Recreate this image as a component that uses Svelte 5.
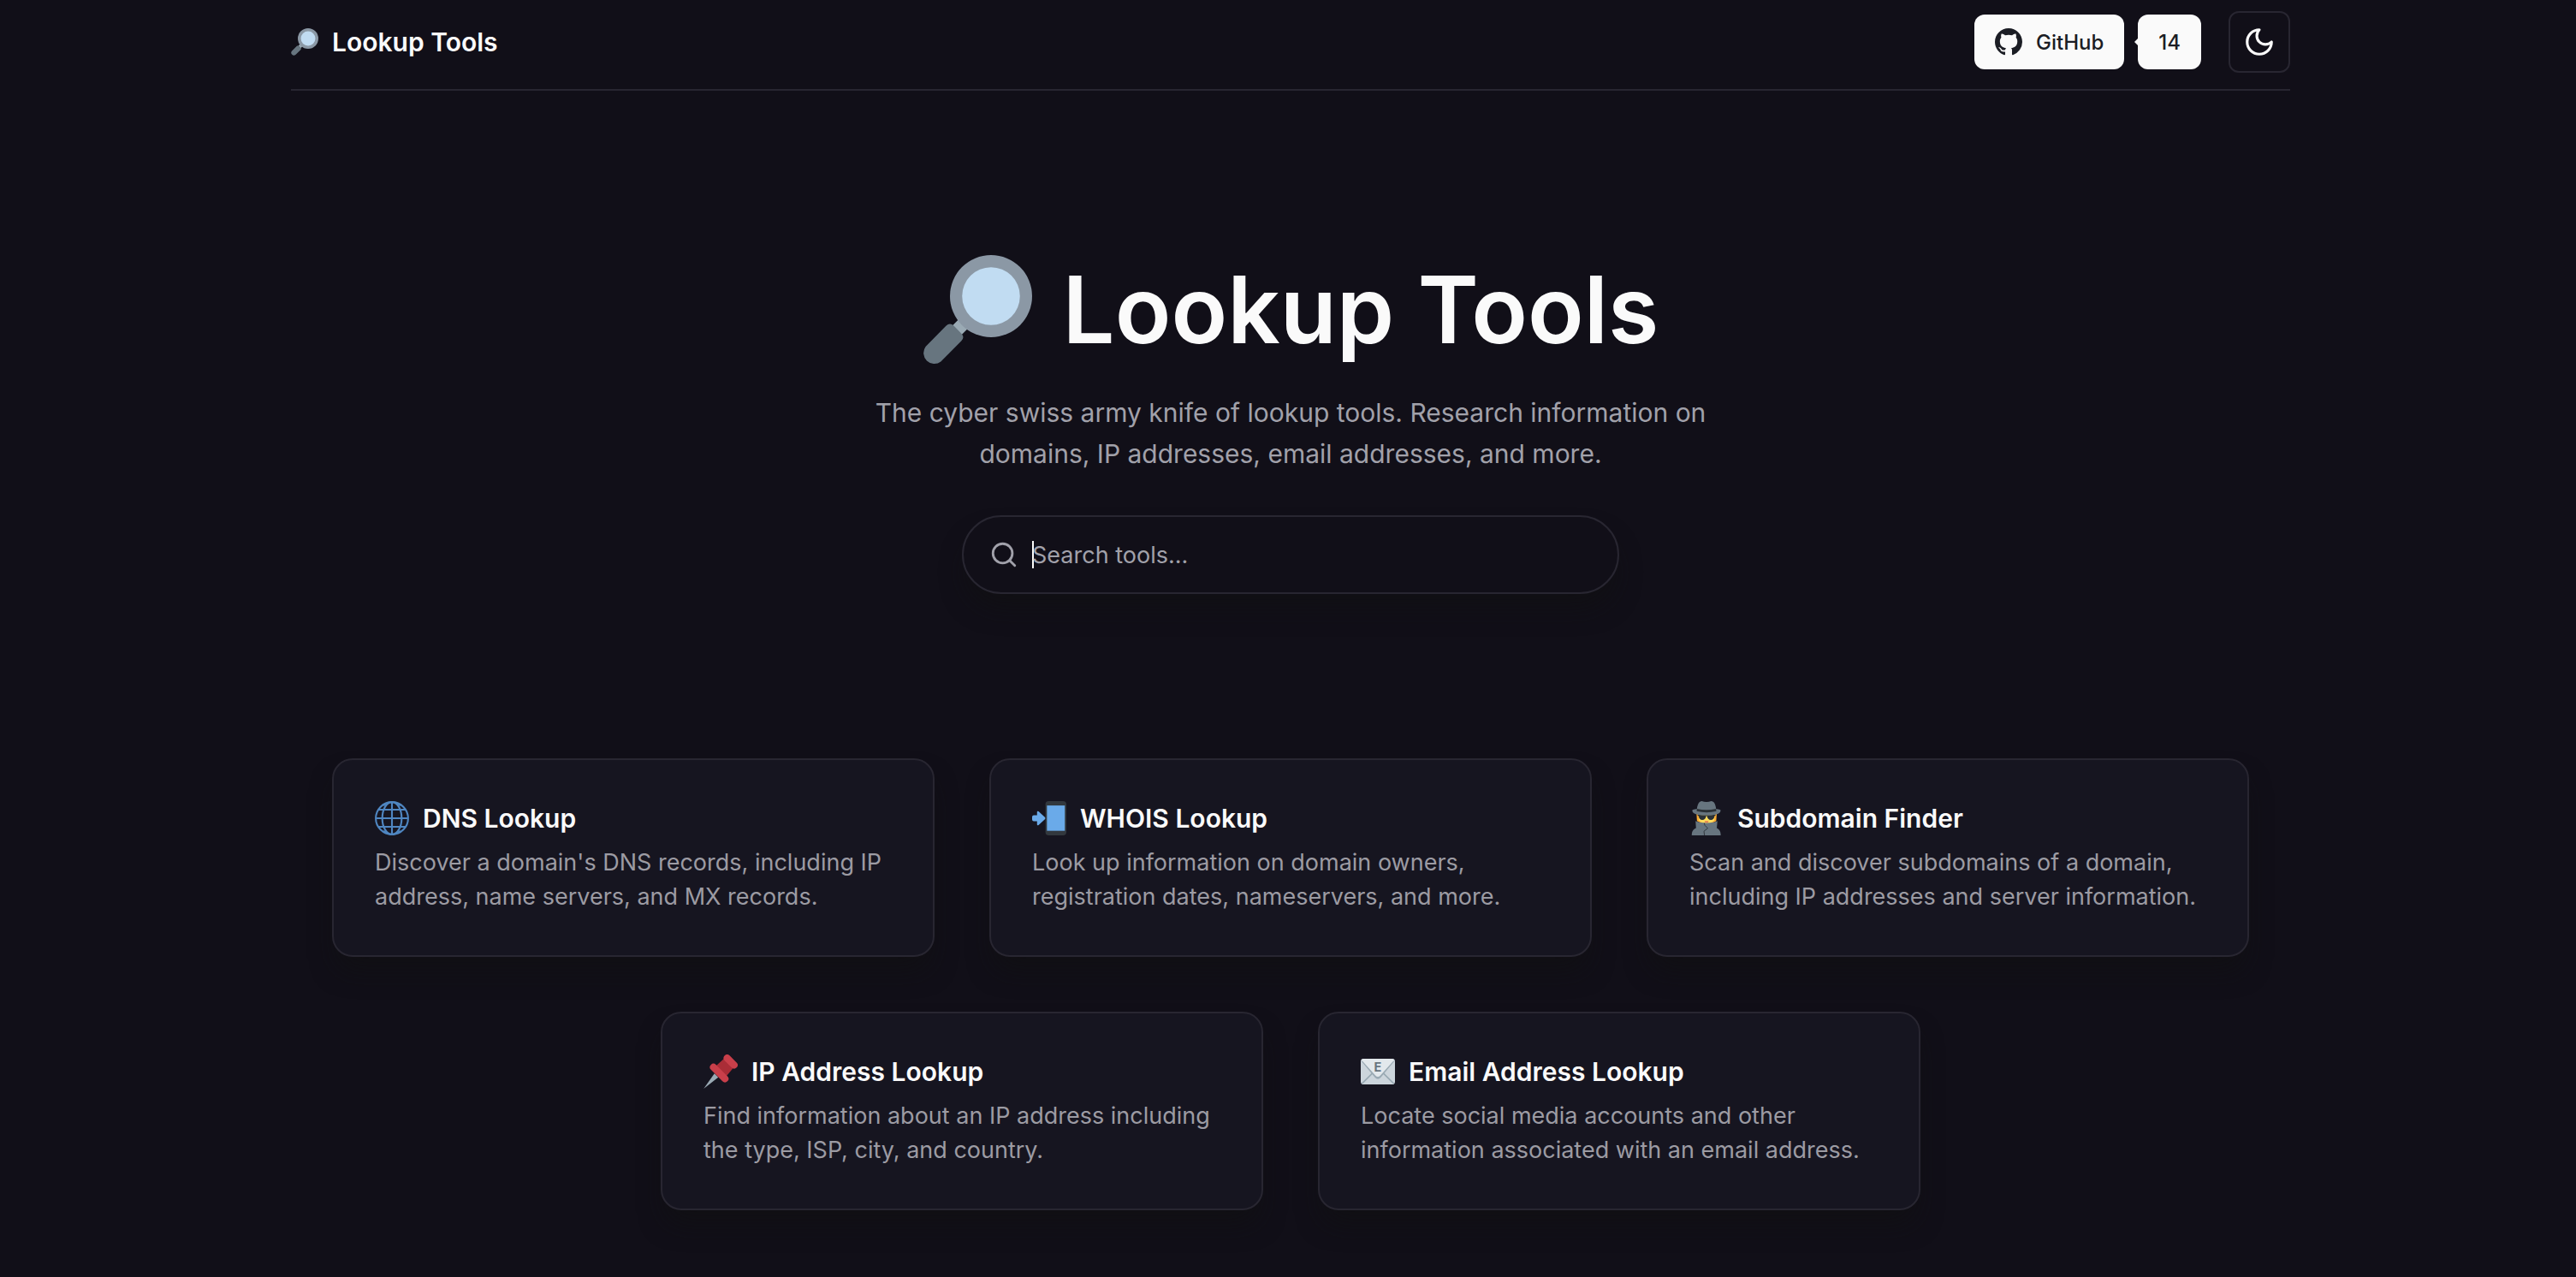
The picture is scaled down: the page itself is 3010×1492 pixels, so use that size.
<script>
  const tools = [
    { icon: 'globe', title: 'DNS Lookup', text: "Discover a domain's DNS records, including IP address, name servers, and MX records." },
    { icon: 'phone', title: 'WHOIS Lookup', text: 'Look up information on domain owners, registration dates, nameservers, and more.' },
    { icon: 'detective', title: 'Subdomain Finder', text: 'Scan and discover subdomains of a domain, including IP addresses and server information.' },
    { icon: 'pin', title: 'IP Address Lookup', text: 'Find information about an IP address including the type, ISP, city, and country.' },
    { icon: 'email', title: 'Email Address Lookup', text: 'Locate social media accounts and other information associated with an email address.' }
  ];
  let query = $state('');
</script>

{#snippet magnifier()}
  <svg viewBox="0 0 36 36" aria-hidden="true">
    <path fill="#9aaab4" d="M9.8 23.2l4-4 3 3-4 4z" />
    <path fill="#67757f" d="M1 30.1l6.7-6.8q1.3-1.3 2.6 0l2.4 2.4q1.3 1.3 0 2.6L6 35a3.54 3.54 0 0 1-5-4.9z" />
    <circle cx="22.5" cy="13.5" r="13.5" fill="#8b98a5" />
    <circle cx="22.5" cy="13.5" r="9.5" fill="#c1dcf2" />
  </svg>
{/snippet}

{#snippet toolIcon(name)}
  <svg viewBox="0 0 36 36" aria-hidden="true">
    {#if name === 'globe'}
      <g fill="none" stroke="#4f86c1" stroke-width="1.9">
        <circle cx="18" cy="18" r="17" />
        <ellipse cx="18" cy="18" rx="10.2" ry="17" />
        <path d="M18 1v34M1 18h34M3.5 9h29M3.5 27h29M9 4.5l3-2M27 4.5l-3-2M9 31.5l3 2M27 31.5l-3 2" />
      </g>
    {:else if name === 'phone'}
      <rect x="14" width="22" height="36" rx="3.5" fill="#32383e" />
      <rect x="15.6" y="4.6" width="18.8" height="26.6" fill="#6aaae9" />
      <path fill="#6aaae9" d="M1.8 14.8h3.4v-3q0-1.9 1.6-1l6.6 6q1.2 1.2 0 2.4l-6.6 6q-1.6.9-1.6-1v-3H1.8Q0 21.2 0 19.4v-2.8Q0 14.8 1.8 14.8z" />
    {:else if name === 'detective'}
      <path fill="#ffac33" d="M7.5 12.5h21.3l-.6 8.5-4 2H12l-4-2z" />
      <path fill="#ffdc5d" d="M9.5 13h17.3l-.7 7.5-4 3h-8l-4-3z" />
      <path fill="#2b3136" d="M8.5 14.2q9.6 1 19.2 0l-.3 1-1 .6q-.4 4-3.8 4-3.4 0-4-4h-1q-.6 4-4 4-3.4 0-3.8-4l-1-.6z" />
      <path fill="#d9564c" d="M16 21.2h4.2l-.6 1.1h-3z" />
      <path fill="#67757f" d="M7.8 10.8C8 3 10.5 0 13 0q2.5.8 5 .8T23 0c2.8 0 5 3 5.3 10.8z" />
      <path fill="#67757f" d="M3.2 9.2c2.3-.8 3.3-1 5.3-1.2h19c2 .2 3 .4 5.200 1.200.4 2-.5 3.300-3 4.200-3 1.100-7 1.500-11.700 1.500s-8.800-.4-11.800-1.500c-2.500-.9-3.400-2.200-3-4.200z" />
      <path fill="#2b3136" d="M7.9 8q10 2.4 20.2 0l.2 2.6q-10 2.6-20.6 0z" />
      <path fill="#67757f" d="M6.5 21q4 1.8 11.5 2 7.5-.2 11.5-2l-.7 7.3c2.6 1 4.2 3.4 4.2 7.7H2.5c0-4.3 1.6-6.7 4.5-7.7z" />
      <path fill="none" stroke="#2b3136" stroke-width=".8" d="M15.500 23l.8 2.500 3 3-4 3.200.6 4.300" />
    {:else if name === 'pin'}
      <path fill="#9aaab4" d="M.2 35.9L11.5 20l4 4z" />
      <path fill="#aa2d37" d="M12 13l9.500-8.500L31.500 14 23 24z" />
      <path stroke="#c93f4a" stroke-width="7.4" stroke-linecap="round" d="M24.9 3.800l7.300 7.300M10.500 13.400l12.100 12.200" />
    {:else}
      <rect y="4.5" width="36" height="27" rx="3" fill="#ccd5dc" />
      <path fill="none" stroke="#9aaab4" stroke-width="1.5" d="M1.2 30.700L13 19M34.800 30.700L23 19" />
      <path fill="#9aaab4" d="M.6 7l14.200 17q3.200 3.600 6.400 0L35.400 7z" />
      <path fill="#e2e8ec" d="M1.2 5.200Q1.800 4.500 3 4.500h30q1.200 0 1.800.7v1L20.600 22q-2.600 3-5.200 0L1.200 6.200z" />
      <text x="17.8" y="18" text-anchor="middle" font-size="13" font-weight="700" fill="#67757f">E</text>
    {/if}
  </svg>
{/snippet}

<div class="page">
  <div class="container">
    <header>
      <a class="brand" href="#home">{@render magnifier()}Lookup Tools</a>
      <nav>
        <a class="pill" href="#github">
          <svg viewBox="0 0 16 16" aria-hidden="true">
            <path fill="#1b1d24" d="M8 0C3.58 0 0 3.58 0 8c0 3.54 2.29 6.53 5.47 7.59.4.07.55-.17.55-.38 0-.19-.01-.82-.01-1.49-2.01.37-2.53-.49-2.69-.94-.09-.23-.48-.94-.82-1.13-.28-.15-.68-.52-.01-.53.63-.01 1.08.58 1.23.82.72 1.21 1.87.87 2.33.66.07-.52.28-.87.51-1.07-1.78-.2-3.64-.89-3.64-3.95 0-.87.31-1.59.82-2.15-.08-.2-.36-1.02.08-2.12 0 0 .67-.21 2.2.82.64-.18 1.32-.27 2-.27s1.36.09 2 .27c1.53-1.04 2.2-.82 2.2-.82.44 1.1.16 1.92.08 2.12.51.56.82 1.27.82 2.15 0 3.07-1.87 3.75-3.65 3.95.29.25.54.73.54 1.48 0 1.07-.01 1.93-.01 2.2 0 .21.15.46.55.38A8.01 8.01 0 0 0 16 8c0-4.42-3.58-8-8-8z" />
          </svg>
          GitHub
        </a>
        <a class="pill count" href="#stargazers">14</a>
        <button class="theme" type="button" aria-label="Toggle theme">
          <svg viewBox="0 0 24 24" fill="none" stroke="currentColor" stroke-width="2" stroke-linecap="round" stroke-linejoin="round" aria-hidden="true">
            <path d="M12 3a6 6 0 0 0 9 9 9 9 0 1 1-9-9Z" />
          </svg>
        </button>
      </nav>
    </header>

    <main>
      <section class="hero">
        <h1>{@render magnifier()}Lookup Tools</h1>
        <p>The cyber swiss army knife of lookup tools. Research information on domains, IP addresses, email addresses, and more.</p>
        <label class="search">
          <svg viewBox="0 0 24 24" fill="none" stroke="currentColor" stroke-width="2" stroke-linecap="round" stroke-linejoin="round" aria-hidden="true">
            <circle cx="11" cy="11" r="8" />
            <path d="m21 21-4.3-4.3" />
          </svg>
          <span class="caret"></span>
          <input type="text" aria-label="Search tools" placeholder="Search tools..." bind:value={query} />
        </label>
      </section>

      <section class="tools">
        {#each tools as tool}
          <a class="card" href={'#' + tool.icon}>
            <h2>{@render toolIcon(tool.icon)}{tool.title}</h2>
            <p>{tool.text}</p>
          </a>
        {/each}
      </section>
    </main>
  </div>
</div>

<style>
  :global(body) {
    background: #110f18;
  }
  .page {
    box-sizing: border-box;
    min-height: 100vh;
    padding: 0 0 76px 6px;
    overflow: hidden;
    color: #fafafa;
    font-family: Inter, 'Liberation Sans', sans-serif;
  }
  .page * {
    box-sizing: border-box;
  }
  svg {
    display: block;
    flex: none;
  }
  a {
    color: inherit;
    text-decoration: none;
  }
  h1, h2, p {
    margin: 0;
  }
  .container {
    max-width: 2336px;
    margin: 0 auto;
  }
  header {
    display: flex;
    align-items: center;
    justify-content: space-between;
    padding: 13px 0 19px;
    border-bottom: 2px solid #282631;
  }
  .brand {
    display: flex;
    align-items: center;
    gap: 16px;
    font-size: 30px;
    font-weight: 600;
  }
  .brand svg {
    width: 32px;
    height: 32px;
  }
  nav {
    display: flex;
    align-items: center;
    gap: 16px;
  }
  .pill {
    display: flex;
    align-items: center;
    gap: 16px;
    height: 64px;
    padding: 0 24px;
    border-radius: 12px;
    background: #fafafa;
    color: #1b1d24;
    font-size: 24px;
    font-weight: 500;
  }
  .pill svg {
    width: 32px;
    height: 32px;
  }
  .count {
    position: relative;
    margin-right: 16px;
  }
  .count::before {
    content: '';
    position: absolute;
    top: 28px;
    left: -4px;
    border: 4px solid transparent;
    border-left: 0;
    border-right-color: #fafafa;
  }
  .theme {
    display: grid;
    place-items: center;
    width: 72px;
    height: 72px;
    padding: 0;
    border: 2px solid #282631;
    border-radius: 12px;
    background: transparent;
    color: #fafafa;
  }
  .theme svg {
    width: 38px;
    height: 38px;
  }
  .hero {
    display: flex;
    flex-direction: column;
    align-items: center;
    padding: 192px 0;
  }
  h1 {
    display: flex;
    align-items: center;
    gap: 36px;
    font-size: 108px;
    font-weight: 600;
    line-height: 128px;
  }
  h1 svg {
    width: 128px;
    height: 128px;
  }
  .hero p {
    max-width: 1000px;
    margin: 32px 0 48px;
    color: #a1a1aa;
    font-size: 30px;
    line-height: 48px;
    text-align: center;
  }
  .search {
    display: flex;
    align-items: center;
    width: 768px;
    max-width: 100%;
    height: 92px;
    padding: 0 30px;
    border: 2px solid #282631;
    border-radius: 46px;
    color: #a1a1aa;
    box-shadow: 0 20px 30px -6px rgb(16 16 17 / 60%);
    background: #110f18;
  }
  .search svg {
    width: 34px;
    height: 34px;
    margin-right: 16px;
  }
  .caret {
    width: 2px;
    height: 32px;
    margin-right: -2px;
    background: #fafafa;
  }
  input {
    flex: 1;
    min-width: 0;
    height: 100%;
    padding: 0;
    border: 0;
    outline: 0;
    background: transparent;
    color: #fafafa;
    font: 27px Inter, 'Liberation Sans', sans-serif;
  }
  input::placeholder {
    color: #a1a1aa;
    opacity: 1;
  }
  .tools {
    display: flex;
    flex-wrap: wrap;
    justify-content: center;
    gap: 64px;
    padding: 0 48px;
  }
  .card {
    flex: 0 0 calc((100% - 128px) / 3);
    padding: 48px;
    border: 2px solid #282631;
    border-radius: 24px;
    background: #161520;
    box-shadow: 0 20px 30px -6px rgb(16 16 17 / 60%);
  }
  h2 {
    display: flex;
    align-items: center;
    gap: 16px;
    font-size: 30px;
    font-weight: 600;
    line-height: 40px;
  }
  h2 svg {
    width: 40px;
    height: 40px;
  }
  .card p {
    margin-top: 12px;
    color: #9c9ba3;
    font-size: 27px;
    line-height: 40px;
  }
</style>
